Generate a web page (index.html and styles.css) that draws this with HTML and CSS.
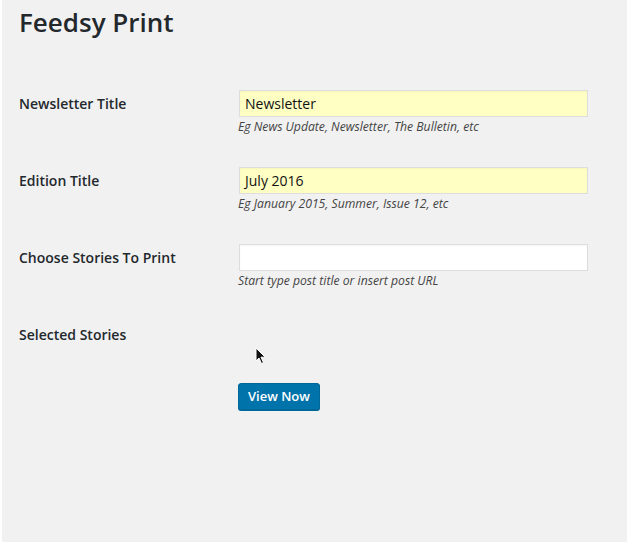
FILE: index.html
```html
<!DOCTYPE html>
<html>
<head>
<meta charset="utf-8">
<link rel="stylesheet" href="styles.css">
</head>
<body>
<div class="page">
  <h1 class="title">Feedsy Print</h1>
  <div class="form">
    <div class="row">
      <label class="label">Newsletter Title</label>
      <div class="field">
        <div class="input filled">Newsletter</div>
        <p class="desc">Eg News Update, Newsletter, The Bulletin, etc</p>
      </div>
    </div>
    <div class="row">
      <label class="label">Edition Title</label>
      <div class="field">
        <div class="input filled">July 2016</div>
        <p class="desc">Eg January 2015, Summer, Issue 12, etc</p>
      </div>
    </div>
    <div class="row">
      <label class="label">Choose Stories To Print</label>
      <div class="field">
        <div class="input"></div>
        <p class="desc">Start type post title or insert post URL</p>
      </div>
    </div>
    <div class="row row-last">
      <label class="label">Selected Stories</label>
      <div class="field"></div>
    </div>
    <div class="actions">
      <button class="btn">View Now</button>
    </div>
  </div>
  <svg class="cursor" width="12" height="18" viewBox="0 0 12 18">
    <path d="M1 1 L1 14 L4 11 L6.5 16.5 L8.5 15.6 L6 10.2 L10.2 10.2 Z" fill="#111" stroke="#fff" stroke-width="1"/>
  </svg>
</div>
</body>
</html>
```
FILE: styles.css
```css
html, body {
  margin: 0;
  padding: 0;
  background: #ffffff;
}
.page {
  position: relative;
  margin-left: 2px;
  width: 625px;
  height: 542px;
  background: #f1f1f1;
  font-family: "Open Sans", "Liberation Sans", sans-serif;
  color: #23282d;
  padding: 0 0 0 17px;
  box-sizing: border-box;
  overflow: hidden;
}
.title {
  margin: 5px 0 0 0;
  font-size: 26px;
  line-height: 34px;
  font-weight: 600;
  color: #23282d;
}
.form {
  margin-top: 51px;
}
.row {
  display: grid;
  grid-template-columns: 219px 350px;
  margin-bottom: 31px;
}
.row-last {
  margin-bottom: 35px;
}
.label {
  font-size: 14px;
  font-weight: 600;
  line-height: 27px;
  color: #23282d;
}
.field {
  min-height: 27px;
}
.input {
  margin-left: 1px;
  width: 349px;
  height: 27px;
  box-sizing: border-box;
  border: 1px solid #dddddd;
  background: #ffffff;
  font-size: 14px;
  line-height: 25px;
  padding: 0 5px;
  color: #111;
  box-shadow: inset 0 1px 2px rgba(0,0,0,0.04);
}
.input.filled {
  background: #ffffc4;
}
.desc {
  margin: 1px 0 0 0;
  font-size: 12.2px;
  font-style: italic;
  line-height: 18px;
  color: #444;
}
.actions {
  padding-left: 219px;
}
.btn {
  font-family: "Open Sans", "Liberation Sans", sans-serif;
  font-size: 13px;
  font-weight: 600;
  height: 27px;
  padding: 0 9px;
  background: #0073aa;
  border: 1px solid #006799;
  border-radius: 3px;
  color: #fff;
  box-shadow: 0 1px 0 #006799;
  line-height: 25px;
}
.cursor {
  position: absolute;
  left: 253px;
  top: 347px;
}
```
